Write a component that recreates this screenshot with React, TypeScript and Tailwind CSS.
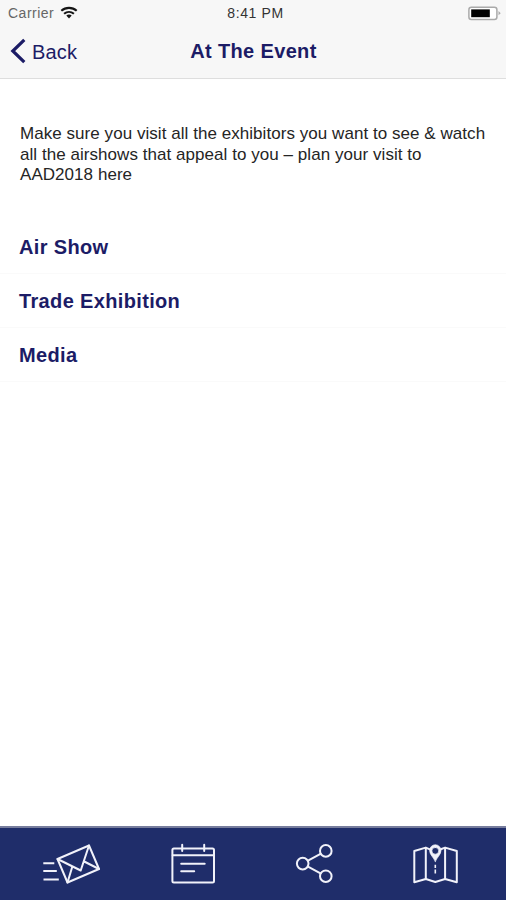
import type { ReactNode } from "react";

const sections = ["Air Show", "Trade Exhibition", "Media"];

function WifiIcon() {
  return (
    <svg className="ml-[6px] h-[14px] w-[18px]" viewBox="0 0 18 14" fill="none" stroke="#151515" strokeWidth="2.1">
      <path d="M1.3 4.8C5.7.9 12.3.9 16.7 4.8" />
      <path d="M4.1 7.8C7 5.3 11 5.3 13.9 7.8" />
      <path d="M6.3 9.5C7.8 8.2 10.2 8.2 11.7 9.5L9 12.4Z" fill="#151515" stroke="none" />
    </svg>
  );
}

function BatteryIcon() {
  return (
    <svg className="h-[15px] w-[34px]" viewBox="0 0 34 15" fill="none">
      <rect x="1.9" y="1.2" width="28" height="12.2" rx="2.5" fill="#fff" stroke="#aaa" strokeWidth="1.5" />
      <rect x="4.2" y="3.4" width="18.6" height="7.8" fill="#000" />
      <path d="M31.5 5.1L33.7 7.2L31.5 9.3Z" fill="#aaa" />
    </svg>
  );
}

function TabIcon({ box, label, children }: { box: string; label: string; children: ReactNode }) {
  return (
    <button aria-label={label} className="flex flex-1 items-center justify-center">
      <svg
        className="h-[48px] w-[60px]"
        viewBox={box}
        fill="none"
        stroke="#f1f2fa"
        strokeWidth="2"
        strokeLinejoin="round"
        strokeLinecap="round"
      >
        {children}
      </svg>
    </button>
  );
}

export default function App() {
  return (
    <div className="flex h-[900px] w-[506px] flex-col overflow-hidden bg-white font-['Liberation_Sans',Arial,sans-serif]">
      <header className="h-[79px] shrink-0 border-b border-[#dedede] bg-[#f7f7f7]">
        <div className="grid h-[26px] grid-cols-3 items-center pr-[5px] pl-[8px] text-[14px] leading-none">
          <div className="flex items-center tracking-[0.5px] text-[#666]">
            <span>Carrier</span>
            <WifiIcon />
          </div>
          <span className="pl-[2px] text-center tracking-[0.6px] whitespace-nowrap text-[#333]">8:41 PM</span>
          <div className="flex justify-end">
            <BatteryIcon />
          </div>
        </div>
        <div className="grid h-[50px] grid-cols-3 items-center pb-[1px] text-[20px] leading-[24px] text-[#1c1c66]">
          <button className="flex items-center pl-[9px]">
            <svg className="h-[28px] w-[18px]" viewBox="0 0 18 28" fill="none" stroke="#1c1c66" strokeWidth="3.2">
              <path d="M15.3 2.8L3.8 14L15.3 25.2" />
            </svg>
            <span className="pt-[2px] pl-[5px] tracking-[0.15px]">Back</span>
          </button>
          <h1 className="pl-[1px] text-center font-bold tracking-[0.35px]">At The Event</h1>
        </div>
      </header>

      <main className="flex-1">
        <p className="pt-[45px] pl-[20px] text-[17px] leading-[20.7px] tracking-[0.05px] text-[#252525]">
          Make sure you visit all the exhibitors you want to see &amp; watch
          <br />
          all the airshows that appeal to you – plan your visit to
          <br />
          AAD2018 here
        </p>
        <ul className="mt-[34px]">
          {sections.map((name) => (
            <li
              key={name}
              className="flex h-[54px] items-center border-b border-[#fafafa] pl-[19px] text-[20px] font-bold tracking-[0.35px] text-[#1c1c66]"
            >
              {name}
            </li>
          ))}
        </ul>
      </main>

      <nav className="flex h-[74px] shrink-0 border-t-2 border-[#777d9d] bg-[#1f2d6a] pr-[9px] pl-[11px]">
        <TabIcon box="42 840 60 48" label="Messages">
          <path d="M57.5 859L89 845.5L99 869L67.5 882.5Z" />
          <path d="M57.5 859L80.7 870.5L89 845.5M67.5 882.5L72.2 867M99 869L84.2 861.5" />
          <path d="M43.3 863.3H54.3M43.3 871H56.8M43.5 879.5H58.8" strokeLinecap="butt" />
        </TabIcon>
        <TabIcon box="163.3 840 60 48" label="Schedule">
          <rect x="172.7" y="848.5" width="41.6" height="34" rx="1.5" />
          <path d="M173 855.3H214M182.5 844.8V851M204.5 844.8V851M181.5 863.7H205M181.5 871.3H194.5" />
        </TabIcon>
        <TabIcon box="285 840 60 48" label="Share">
          <circle cx="302.7" cy="863.6" r="5.8" />
          <circle cx="325.8" cy="850.9" r="5.8" />
          <circle cx="325.8" cy="876.2" r="5.8" />
          <path d="M308 860.7L320.5 853.8M308 866.6L320.5 873.3" />
        </TabIcon>
        <TabIcon box="406.2 840 60 48" label="Map">
          <path d="M430 849.3L426 847.6L414.5 851V882.3L426 879L435.5 882L445.3 879L457 882.3V851L445.3 847.6L441 849.3" />
          <path d="M426 848V879M445.3 848V879" />
          <path
            d="M435.5 861.5C434 857.5 429.8 854.6 429.8 850.5A5.7 5.7 0 0 1 441.2 850.5C441.2 854.6 437 857.5 435.5 861.5ZM435.5 847.4A3.4 3.4 0 1 0 435.5 854.2A3.4 3.4 0 1 0 435.5 847.4Z"
            fill="#f1f2fa"
            fillRule="evenodd"
            strokeWidth="0.7"
          />
          <path d="M435.5 864.8V868M435.5 869.5V873.5" strokeWidth="1.6" strokeLinecap="butt" />
        </TabIcon>
      </nav>
    </div>
  );
}
